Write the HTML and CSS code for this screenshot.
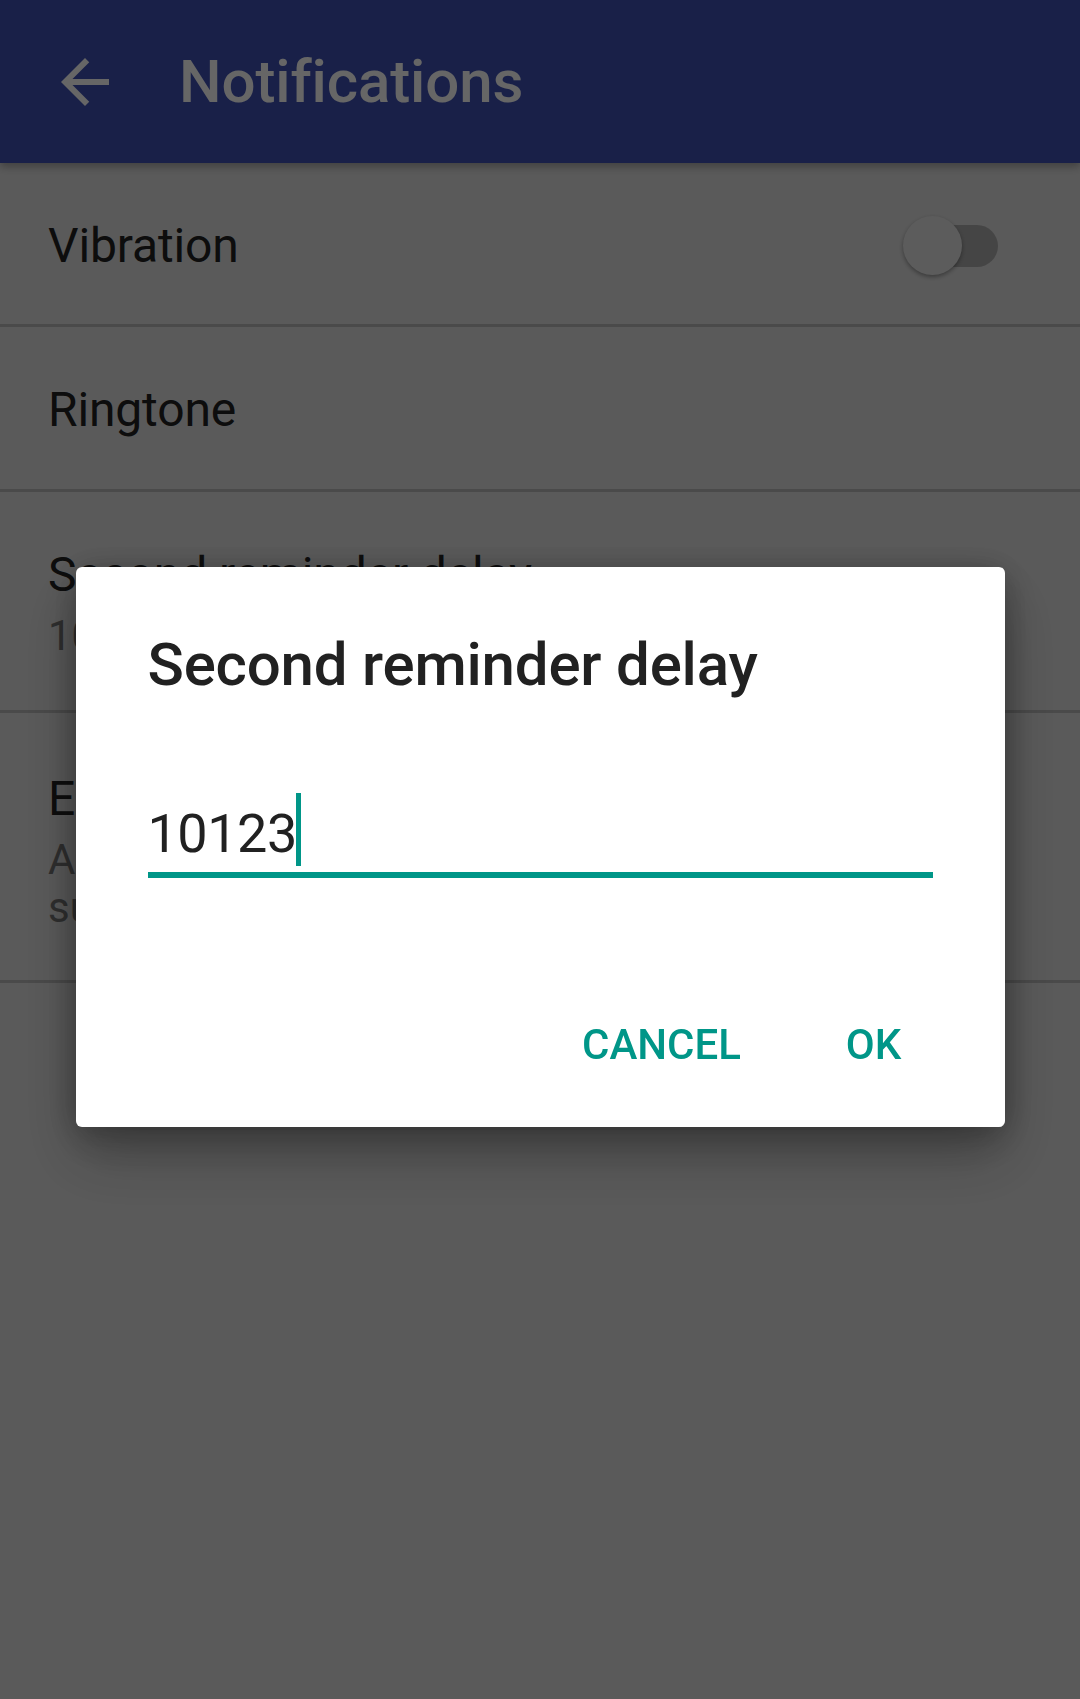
FILE: index.html
```html
<!DOCTYPE html>
<html lang="en">
<head>
<meta charset="utf-8">
<title>Notifications</title>
<link rel="stylesheet" href="styles.css">
</head>
<body>
<div class="screen">
  <header class="toolbar">
    <svg class="nav-icon" viewBox="0 0 24 24" width="72" height="72" aria-hidden="true">
      <path d="M20 11H7.83l5.59-5.59L12 4l-8 8 8 8 1.41-1.41L7.83 13H20v-2z" fill="#ffffff"/>
    </svg>
    <h1 class="toolbar-title">Notifications</h1>
  </header>

  <main class="prefs">
    <div class="pref pref-switch">
      <div class="pref-title">Vibration</div>
      <div class="switch">
        <span class="switch-track"></span>
        <span class="switch-thumb"></span>
      </div>
    </div>
    <div class="pref pref-single">
      <div class="pref-title">Ringtone</div>
    </div>
    <div class="pref pref-double">
      <div class="pref-title">Second reminder delay</div>
      <div class="pref-summary">10 minutes</div>
    </div>
    <div class="pref pref-triple">
      <div class="pref-title">Escalating alarm</div>
      <div class="pref-summary">Automatically raise the volume<br>such as for reminders</div>
    </div>
  </main>

  <div class="scrim">
    <div class="dialog" role="dialog">
      <h2 class="dialog-title">Second reminder delay</h2>
      <div class="field">
        <span class="field-text">10123</span><span class="cursor"></span>
      </div>
      <div class="dialog-actions">
        <button class="btn">CANCEL</button>
        <button class="btn">OK</button>
      </div>
    </div>
  </div>
</div>
</body>
</html>
```

FILE: styles.css
```css
* {
  box-sizing: border-box;
}

html, body {
  margin: 0;
  padding: 0;
}

body {
  font-family: Roboto, "Liberation Sans", sans-serif;
  background: #e1e1e1;
  color: #212121;
}

.screen {
  width: 1080px;
  min-height: 1699px;
  background: #e1e1e1;
}

.toolbar {
  height: 163px;
  background: #3f51b5;
  display: flex;
  align-items: center;
  padding-left: 49px;
  box-shadow: 0 4px 8px rgba(0, 0, 0, 0.28);
  position: relative;
  z-index: 1;
}

.nav-icon {
  display: block;
  flex: none;
  margin-right: 58px;
}

.toolbar-title {
  margin: 0;
  font-size: 60px;
  line-height: 72px;
  font-weight: 500;
  letter-spacing: -0.1px;
  color: #ffffff;
}

.prefs {
  display: flex;
  flex-direction: column;
}

.pref {
  padding: 51px 48px 46px;
  border-bottom: 3px solid #b9b9b9;
}

.pref-single {
  padding-bottom: 47px;
}

.pref-double {
  padding-bottom: 50px;
}

.pref-triple {
  padding-top: 54px;
  padding-bottom: 48px;
}

.pref-switch {
  display: flex;
  align-items: center;
  justify-content: space-between;
  padding-right: 82px;
}

.pref-title {
  font-size: 48px;
  line-height: 64px;
  letter-spacing: -0.15px;
  color: #212121;
  white-space: nowrap;
}

.pref-summary {
  margin-top: 5px;
  font-size: 42px;
  line-height: 48px;
  color: #757575;
  white-space: nowrap;
}

.switch {
  position: relative;
  width: 95px;
  height: 60px;
  flex: none;
}

.switch-track {
  position: absolute;
  right: 0;
  top: 9px;
  width: 93px;
  height: 42px;
  border-radius: 21px;
  background: #adadad;
}

.switch-thumb {
  position: absolute;
  left: 0;
  top: 0;
  width: 59px;
  height: 59px;
  border-radius: 50%;
  background: #e6e6e6;
  box-shadow: 0 2px 4px rgba(0, 0, 0, 0.35);
}

.scrim {
  position: fixed;
  inset: 0;
  background: rgba(0, 0, 0, 0.6);
  display: flex;
  align-items: center;
  justify-content: center;
  z-index: 5;
}

.dialog {
  width: 929px;
  background: #ffffff;
  border-radius: 6px;
  padding: 62px 72px 28px;
  margin-top: -6px;
  box-shadow: 0 30px 60px rgba(0, 0, 0, 0.24), 0 12px 40px rgba(0, 0, 0, 0.22), 0 0 30px rgba(0, 0, 0, 0.14);
}

.dialog-title {
  margin: 0;
  font-size: 60px;
  line-height: 72px;
  font-weight: 500;
  letter-spacing: -0.2px;
  color: #212121;
}

.field {
  margin-top: 96px;
  padding-bottom: 2px;
  border-bottom: 6px solid #009688;
  height: 81px;
  white-space: nowrap;
}

.field-text {
  font-size: 54px;
  line-height: 73px;
  letter-spacing: -0.5px;
  color: #212121;
  vertical-align: top;
}

.cursor {
  display: inline-block;
  vertical-align: top;
  width: 5px;
  height: 73px;
  margin-top: -4px;
  margin-left: -1px;
  background: #009688;
}

.dialog-actions {
  margin-top: 113px;
  display: flex;
  justify-content: flex-end;
  gap: 20px;
  margin-right: -37px;
}

.btn {
  min-width: 192px;
  height: 108px;
  padding: 0 16px;
  border: none;
  background: transparent;
  font-family: Roboto, "Liberation Sans", sans-serif;
  font-size: 42px;
  line-height: 108px;
  font-weight: 500;
  color: #009688;
  text-align: center;
}
```
